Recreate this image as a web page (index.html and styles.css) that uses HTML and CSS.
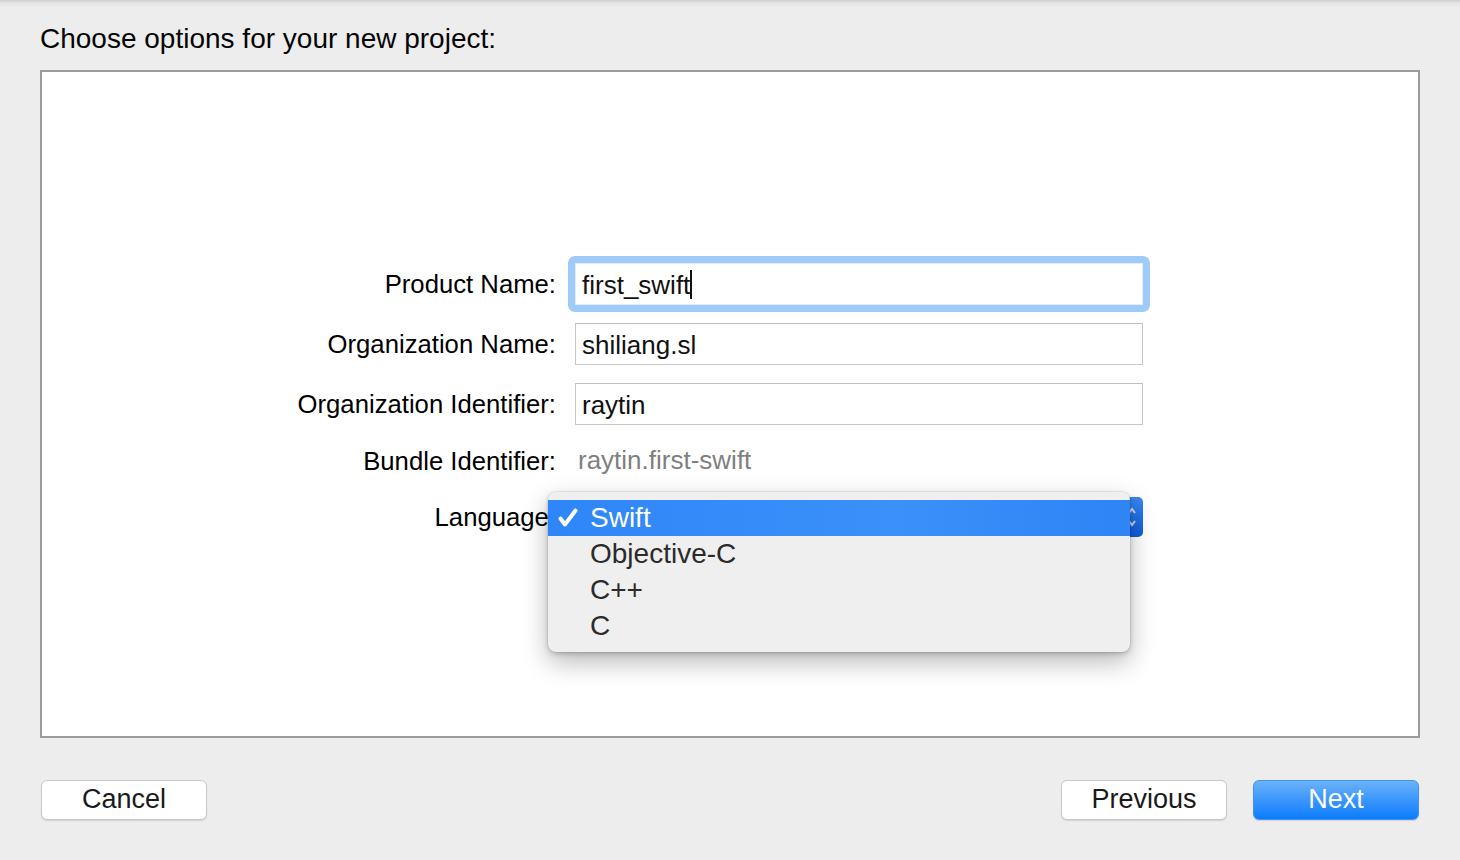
FILE: index.html
```html
<!DOCTYPE html>
<html>
<head>
<meta charset="utf-8">
<link rel="stylesheet" href="styles.css">
</head>
<body>
<div class="sheet">
  <h1 class="title">Choose options for your new project:</h1>
  <div class="panel">
    <div class="form">
      <div class="label">Product Name:</div>
      <div class="field focused"><span class="value">first_swift</span><span class="caret"></span></div>

      <div class="label">Organization Name:</div>
      <div class="field"><span class="value">shiliang.sl</span></div>

      <div class="label">Organization Identifier:</div>
      <div class="field"><span class="value">raytin</span></div>

      <div class="label">Bundle Identifier:</div>
      <div class="static">raytin.first-swift</div>

      <div class="label">Language:</div>
      <div class="popup-cell">
        <div class="popup">
          <svg class="arrows" width="10" height="24" viewBox="0 0 10 24">
            <path d="M2 8 L5 4 L8 8" fill="none" stroke="rgba(255,255,255,0.75)" stroke-width="2"/>
            <path d="M2 16 L5 20 L8 16" fill="none" stroke="rgba(255,255,255,0.75)" stroke-width="2"/>
          </svg>
        </div>
        <ul class="menu">
          <li class="item selected">
            <span class="check">
              <svg width="20" height="20" viewBox="0 0 20 20">
                <path d="M2.5 10.5 L7 16.5 L17.5 2.5" fill="none" stroke="#fff" stroke-width="3.9" stroke-linecap="round" stroke-linejoin="round"/>
              </svg>
            </span><span>Swift</span></li>
          <li class="item"><span class="check"></span><span>Objective-C</span></li>
          <li class="item"><span class="check"></span><span>C++</span></li>
          <li class="item"><span class="check"></span><span>C</span></li>
        </ul>
      </div>
    </div>
  </div>
  <div class="buttons">
    <button class="btn">Cancel</button>
    <div class="right">
      <button class="btn">Previous</button>
      <button class="btn primary">Next</button>
    </div>
  </div>
</div>
</body>
</html>
```
FILE: styles.css
```css
html, body {
  margin: 0;
  padding: 0;
}
body {
  width: 1460px;
  height: 860px;
  overflow: hidden;
  background: linear-gradient(#cfcfcf 0px, #e4e4e4 3px, #ededed 7px, #ededed 100%);
  font-family: "Liberation Sans", Arial, sans-serif;
  color: #000;
}
.sheet {
  padding: 23px 40px 0 40px;
}
.title {
  margin: 0;
  font-size: 28px;
  font-weight: normal;
  line-height: 32px;
  height: 32px;
  color: #050505;
}
.panel {
  margin-top: 15px;
  height: 664px;
  background: #fff;
  border: 2px solid #9b9b9b;
}
.form {
  display: grid;
  grid-template-columns: 514px 568px;
  grid-template-rows: 42px 42px 42px 36px 40px;
  column-gap: 19px;
  row-gap: 18px;
  padding-top: 191px;
  align-items: center;
}
.label {
  text-align: right;
  font-size: 25.7px;
  line-height: 30px;
  color: #000;
}
.field {
  position: relative;
  height: 42px;
  box-sizing: border-box;
  border: 1px solid #c6c6c6;
  border-top-color: #bdbdbd;
  background: #fff;
  display: flex;
  align-items: center;
  padding-left: 6px;
  font-size: 26px;
  color: #111;
}
.field.focused {
  border-color: #e6eef8;
  z-index: 0;
}
.field.focused::before {
  content: "";
  position: absolute;
  left: -8px;
  right: -8px;
  top: -8px;
  bottom: -8px;
  border-radius: 7px;
  background: #9ecbf7;
  z-index: -1;
}
.field.focused::after {
  content: "";
  position: absolute;
  inset: -1px;
  background: #fff;
  border: 1px solid #e3ecf7;
  z-index: -1;
}
.value {
  line-height: 30px;
  padding-top: 2px;
}
.caret {
  display: inline-block;
  width: 2px;
  height: 29px;
  background: #111;
  margin-left: 0px;
}
.static {
  font-size: 26px;
  line-height: 30px;
  color: #7f7f7f;
  padding-left: 3px;
  margin-top: -2px;
}
.popup-cell {
  position: relative;
  height: 40px;
}
.popup {
  height: 40px;
  border-radius: 5px;
  background: linear-gradient(#3a87f2, #0c5ddb);
  display: flex;
  justify-content: flex-end;
  align-items: center;
  padding-right: 6px;
}
.arrows {
  display: block;
}
.menu {
  position: absolute;
  left: -27px;
  top: -5px;
  width: 582px;
  margin: 0;
  padding: 8px 0;
  list-style: none;
  background: #efefef;
  border-radius: 8px;
  box-shadow: 0 0 0 1px rgba(0,0,0,0.06), 0 10px 26px rgba(0,0,0,0.28), 0 2px 5px rgba(0,0,0,0.18);
  z-index: 2;
}
.item {
  height: 36px;
  display: flex;
  align-items: center;
  font-size: 28px;
  color: #2b2b2b;
}
.item.selected {
  background: linear-gradient(90deg, #2f86f8, #3b90f9 60%, #2f84f6);
  color: #fff;
}
.check {
  width: 42px;
  box-sizing: border-box;
  padding-left: 10px;
  display: flex;
  align-items: center;
}
.check svg {
  display: block;
}
.buttons {
  display: flex;
  justify-content: space-between;
  margin-top: 42px;
  padding: 0 1px 0 1px;
}
.right {
  display: flex;
  gap: 26px;
}
.btn {
  width: 166px;
  height: 40px;
  box-sizing: border-box;
  border: 1px solid #c9c9c9;
  border-radius: 6px;
  background: #fff;
  box-shadow: 0 1px 1px rgba(0,0,0,0.12);
  font-family: "Liberation Sans", Arial, sans-serif;
  font-size: 27px;
  color: #1a1a1a;
  padding: 0 0 2px 0;
  line-height: 34px;
}
.btn.primary {
  background: linear-gradient(#6bb2fa, #0b7bfe);
  border-color: #3f93f3;
  color: #fff;
}
```
